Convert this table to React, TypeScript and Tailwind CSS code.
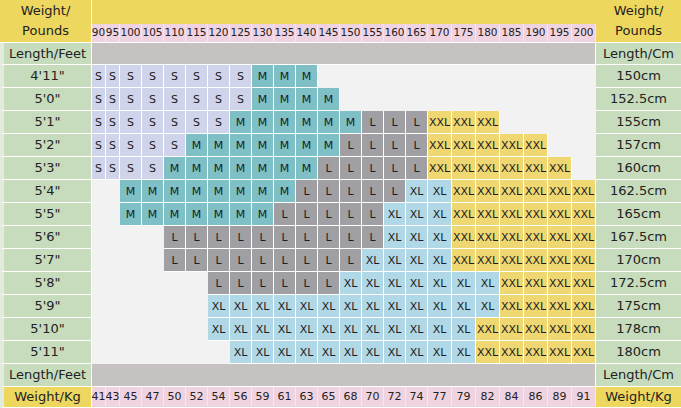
const pounds = [90, 95, 100, 105, 110, 115, 120, 125, 130, 135, 140, 145, 150, 155, 160, 165, 170, 175, 180, 185, 190, 195, 200]
const kilos = [41, 43, 45, 47, 50, 52, 54, 56, 59, 61, 63, 65, 68, 70, 72, 74, 77, 79, 82, 84, 86, 89, 91]

// one char per weight column: . empty, S, M, L, X = XL, Z = XXL
const rows = [
    { feet: `4'11"`, cm: '150cm', sizes: 'SSSSSSSSMMM............' },
    { feet: `5'0"`, cm: '152.5cm', sizes: 'SSSSSSSSMMMM...........' },
    { feet: `5'1"`, cm: '155cm', sizes: 'SSSSSSSMMMMMMLLLZZZ....' },
    { feet: `5'2"`, cm: '157cm', sizes: 'SSSSSMMMMMMMLLLLZZZZZ..' },
    { feet: `5'3"`, cm: '160cm', sizes: 'SSSSMMMMMMMLLLLLZZZZZZ.' },
    { feet: `5'4"`, cm: '162.5cm', sizes: '..MMMMMMMMLLLLLXXZZZZZZ' },
    { feet: `5'5"`, cm: '165cm', sizes: '..MMMMMMMLLLLLXXXZZZZZZ' },
    { feet: `5'6"`, cm: '167.5cm', sizes: '....LLLLLLLLLLXXXZZZZZZ' },
    { feet: `5'7"`, cm: '170cm', sizes: '....LLLLLLLLLXXXXZZZZZZ' },
    { feet: `5'8"`, cm: '172.5cm', sizes: '......LLLLLLXXXXXXXZZZZ' },
    { feet: `5'9"`, cm: '175cm', sizes: '......XXXXXXXXXXXXXZZZZ' },
    { feet: `5'10"`, cm: '178cm', sizes: '......XXXXXXXXXXXXZZZZZ' },
    { feet: `5'11"`, cm: '180cm', sizes: '.......XXXXXXXXXXXZZZZZ' },
]

const sizeStyle: Record<string, { label: string; cls: string }> = {
    S: { label: 'S', cls: 'bg-[#d0d4ea]' },
    M: { label: 'M', cls: 'bg-[#7fc0c6]' },
    L: { label: 'L', cls: 'bg-[#a09fa3]' },
    X: { label: 'XL', cls: 'bg-[#b0d8e6]' },
    Z: { label: 'XXL', cls: 'bg-[#efd772]' },
}

const greenCell = 'flex items-center justify-center bg-[#c6dcbc] border-r border-b border-white text-[13px] text-[#222]'
const yellowCell = 'flex items-center justify-center bg-[#eed75f] border-r border-b border-white text-[13px] text-[#222]'
const pinkCell = 'flex items-center justify-center bg-[#efd3e1] border-r border-b border-r-[#f7e6ee] border-b-white text-[10.5px] text-[#222]'
const grayBand = 'col-span-23 bg-[#c7c2c2] border-r border-b border-white'

export default function App() {
    return (
        <div className="grid w-[681px] h-[408px] grid-cols-[92px_14px_14px_repeat(14,22px)_repeat(7,24px)_85px] grid-rows-[24px_19px_22px_repeat(13,23px)_23px_21px] bg-[#f2f2f2] font-['DejaVu_Sans',sans-serif] overflow-hidden">

            {/* header: weight in pounds */}
            <div className={`${yellowCell} row-span-2 flex-col leading-[20px]`}>
                <span>Weight/</span>
                <span>Pounds</span>
            </div>
            <div className="col-span-23 bg-[#eed75f]" />
            <div className={`${yellowCell} row-span-2 flex-col leading-[20px] border-r-0`}>
                <span>Weight/</span>
                <span>Pounds</span>
            </div>
            {pounds.map(p => (
                <div key={p} className={pinkCell}>{p}</div>
            ))}

            {/* length row */}
            <div className={`${greenCell} border-l-4 border-l-[#e2ebdc]`}>Length/Feet</div>
            <div className={grayBand} />
            <div className={`${greenCell} border-r-0`}>Length/Cm</div>

            {/* size grid */}
            {rows.map(row => (
                <div key={row.feet} className="contents">
                    <div className={`${greenCell} border-l-4 border-l-[#e2ebdc]`}>{row.feet}</div>
                    {row.sizes.split('').map((s, i) => {
                        const st = sizeStyle[s]
                        if (!st) return <div key={i} />
                        return (
                            <div
                                key={i}
                                className={`flex items-center justify-center border-r border-b border-white whitespace-nowrap text-[11px] leading-none text-[#1c1c24] ${st.cls}`}
                            >
                                {st.label}
                            </div>
                        )
                    })}
                    <div className={`${greenCell} border-r-0`}>{row.cm}</div>
                </div>
            ))}

            {/* bottom length + kg rows */}
            <div className={`${greenCell} border-l-4 border-l-[#e2ebdc]`}>Length/Feet</div>
            <div className={grayBand} />
            <div className={`${greenCell} border-r-0`}>Length/Cm</div>

            <div className={`${yellowCell} border-l-4 border-l-[#e2ebdc]`}>Weight/Kg</div>
            {kilos.map((k, i) => (
                <div key={i} className={`${pinkCell} text-[11px]`}>{k}</div>
            ))}
            <div className={`${yellowCell} border-r-0`}>Weight/Kg</div>
        </div>
    )
}
